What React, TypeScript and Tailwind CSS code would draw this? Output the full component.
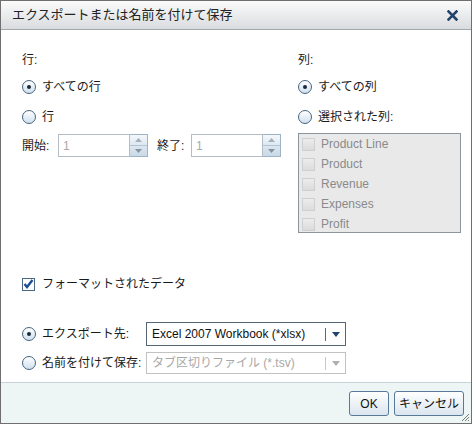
import React from 'react';

const font = { fontFamily: '"Liberation Sans", "Noto Sans CJK JP", sans-serif' };

function Radio({ checked }: { checked?: boolean }) {
  return (
    <span className="w-[14px] h-[14px] rounded-full border border-[#46647f] bg-gradient-to-b from-white to-[#cfe0ee] flex items-center justify-center shrink-0">
      {checked && <span className="w-[4px] h-[4px] rounded-full bg-[#1c2a38]" />}
    </span>
  );
}

function Spinner() {
  return (
    <div className="flex h-[23px]">
      <div className="w-[72px] h-full border border-[#b4bcc4] bg-white text-[#a8a8a8] text-[12px] flex items-center pl-[4px]">1</div>
      <div className="w-[18px] h-full flex flex-col border border-l-0 border-[#9fb3c6]">
        <div className="flex-1 bg-gradient-to-b from-[#f4f8fb] to-[#dde8f1] flex items-center justify-center border-b border-[#b4c4d4]">
          <svg width="7" height="4" viewBox="0 0 7 4"><path d="M0 4 L3.5 0 L7 4 Z" fill="#a4b0bb" /></svg>
        </div>
        <div className="flex-1 bg-gradient-to-b from-[#dce7f0] to-[#c9d9e6] flex items-center justify-center">
          <svg width="7" height="4" viewBox="0 0 7 4"><path d="M0 0 L3.5 4 L7 0 Z" fill="#8594a3" /></svg>
        </div>
      </div>
    </div>
  );
}

function Select({ label, disabled }: { label: string; disabled?: boolean }) {
  return (
    <div
      className={`w-[200px] flex items-center border ${disabled ? 'border-[#c2c2c2] text-[#a8a8a8] h-[22px]' : 'border-[#556474] text-[#111] h-[24px]'} bg-white text-[12px]`}
    >
      <span className="flex-1 pl-[5px] whitespace-nowrap">{label}</span>
      <span className={`w-[1px] h-[13px] ${disabled ? 'bg-[#c8c8c8]' : 'bg-[#666]'}`} />
      <span className="w-[19px] flex justify-center">
        <svg width="8" height="5" viewBox="0 0 8 5"><path d="M0 0 L8 0 L4 5 Z" fill={disabled ? '#b0b0b0' : '#23466e'} /></svg>
      </span>
    </div>
  );
}

const columns = ['Product Line', 'Product', 'Revenue', 'Expenses', 'Profit'];

export default function App() {
  return (
    <div style={font} className="w-[472px] h-[424px] relative flex flex-col border border-[#6f6f6f] bg-white text-[12px] text-[#1a1a1a] overflow-hidden">
      {/* Title bar */}
      <div className="h-[29px] shrink-0 flex items-center justify-between pl-[11px] pr-[13px] bg-gradient-to-b from-[#fbfbfb] to-[#d9dcdf] border-b border-[#a3a8ad]">
        <span className="text-[13px] text-[#222]">エクスポートまたは名前を付けて保存</span>
        <svg width="11" height="11" viewBox="0 0 11 11">
          <path d="M1.5 1.5 L9.5 9.5 M9.5 1.5 L1.5 9.5" stroke="#22436a" strokeWidth="2.6" strokeLinecap="square" />
        </svg>
      </div>

      {/* Body */}
      <div className="flex-1 flex flex-col pl-[21px] pt-[22px] border-b border-[#c9d2d6]">
        <div className="flex">
          {/* Rows */}
          <div className="w-[276px] flex flex-col">
            <div className="h-[16px] flex items-center">行:</div>
            <label className="mt-[11px] h-[16px] flex items-center gap-[6px]">
              <Radio checked />
              <span>すべての行</span>
            </label>
            <label className="mt-[14px] h-[16px] flex items-center gap-[6px]">
              <Radio />
              <span>行</span>
            </label>
            <div className="mt-[9px] flex items-center">
              <span className="w-[36px]">開始:</span>
              <Spinner />
              <span className="ml-[9px] w-[34px]">終了:</span>
              <Spinner />
            </div>
          </div>

          {/* Columns */}
          <div className="flex flex-col">
            <div className="h-[16px] flex items-center">列:</div>
            <label className="mt-[11px] h-[16px] flex items-center gap-[6px]">
              <Radio checked />
              <span>すべての列</span>
            </label>
            <label className="mt-[14px] h-[16px] flex items-center gap-[6px]">
              <Radio />
              <span>選択された列:</span>
            </label>
            <div className="mt-[8px] w-[163px] h-[100px] border border-[#8c949c] bg-[#e9e9e9] flex flex-col overflow-hidden">
              {columns.map((c) => (
                <div key={c} className="h-[20px] shrink-0 flex items-center pl-[3px] gap-[6px] text-[#8a8a8a]">
                  <span className="w-[13px] h-[13px] border border-[#cfcfcf] bg-gradient-to-b from-[#ececec] to-[#dcdcdc]" />
                  <span>{c}</span>
                </div>
              ))}
            </div>
          </div>
        </div>

        <label className="mt-[43px] h-[16px] flex items-center gap-[7px]">
          <span className="w-[13px] h-[13px] border border-[#4a6784] bg-white flex items-center justify-center">
            <svg width="11" height="10" viewBox="0 0 11 10">
              <path d="M1.5 5 L4 8 L9.5 1" stroke="#1f4f96" strokeWidth="2.4" fill="none" />
            </svg>
          </span>
          <span>フォーマットされたデータ</span>
        </label>

        <div className="mt-[30px] flex items-center">
          <label className="w-[124px] flex items-center gap-[6px]">
            <Radio checked />
            <span>エクスポート先:</span>
          </label>
          <Select label="Excel 2007 Workbook (*xlsx)" />
        </div>
        <div className="mt-[6px] flex items-center">
          <label className="w-[124px] flex items-center gap-[6px]">
            <Radio />
            <span>名前を付けて保存:</span>
          </label>
          <Select label="タブ区切りファイル (*.tsv)" disabled />
        </div>
      </div>

      {/* Footer */}
      <div className="h-[40px] shrink-0 bg-[#eef5f5] flex items-center justify-end gap-[5px] pr-[7px] pt-[1px]">
        <button className="w-[40px] h-[25px] rounded-[3px] border border-[#58799a] bg-gradient-to-b from-white to-[#dbe5ee] text-[12px] text-[#111]">OK</button>
        <button className="w-[70px] h-[25px] rounded-[3px] border border-[#58799a] bg-gradient-to-b from-white to-[#dbe5ee] text-[12px] text-[#111]">キャンセル</button>
      </div>

      <svg className="absolute right-[1px] bottom-[1px]" width="9" height="9" viewBox="0 0 9 9">
        <path d="M8 1 L1 8 M8 4 L4 8 M8 7 L7 8" stroke="#7a7a7a" strokeWidth="1" />
      </svg>
    </div>
  );
}
